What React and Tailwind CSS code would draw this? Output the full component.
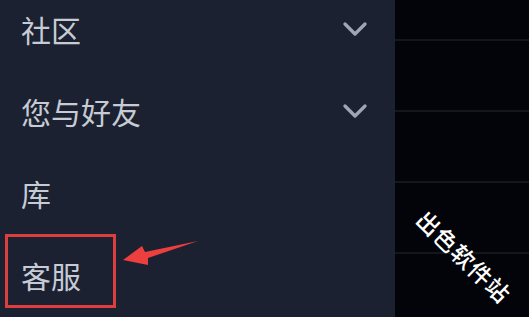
import { ChevronDown } from 'lucide-react';

const menu = [
  { label: '社区', more: true },
  { label: '您与好友', more: true },
  { label: '库', more: false },
  { label: '客服', more: false },
];

const App = () => {
  return (
    <div
      className="relative flex h-[317px] w-[529px] overflow-hidden bg-[#03040a]"
      style={{ fontFamily: '"Noto Sans CJK SC", "Noto Sans", sans-serif' }}
    >
      {/* Sidebar */}
      <div className="relative h-full w-[395px] shrink-0 bg-[#1b2131]">
        <div className="-mt-[12px] flex flex-col">
          {menu.map((item) => (
            <div key={item.label} className="flex h-[82px] items-center justify-between pl-[21px] pr-[20px]">
              <span className="text-[30px] leading-none text-[#c6cbd4]">{item.label}</span>
              {item.more && <ChevronDown size={40} strokeWidth={2} className="text-[#9ea6b1]" />}
            </div>
          ))}
        </div>

        {/* annotation: red box + arrow */}
        <div className="absolute left-[5px] top-[234px] h-[74px] w-[111px] border-[3px] border-[#dc3d3d]" />
        <svg className="absolute left-[118px] top-[236px]" width="84" height="32" viewBox="0 0 84 32">
          <polygon points="80,5 30,22 30,29 5,24 24,10 27,16" fill="#ee3f3f" />
        </svg>
      </div>

      {/* Right dark area */}
      <div className="flex h-full flex-1 flex-col">
        <div className="h-[41px] shrink-0 border-b-2 border-[#12161d]" />
        <div className="h-[71px] shrink-0 border-b-2 border-[#12161d]" />
        <div className="h-[71px] shrink-0 border-b-2 border-[#12161d]" />
        <div className="h-[71px] shrink-0 border-b-2 border-[#12161d]" />
      </div>

      {/* watermark */}
      <div className="absolute left-[404px] top-[245px] rotate-[44deg] text-[23px] font-medium leading-none tracking-[1px] text-white">
        出色软件站
      </div>
    </div>
  );
};

export default App;
